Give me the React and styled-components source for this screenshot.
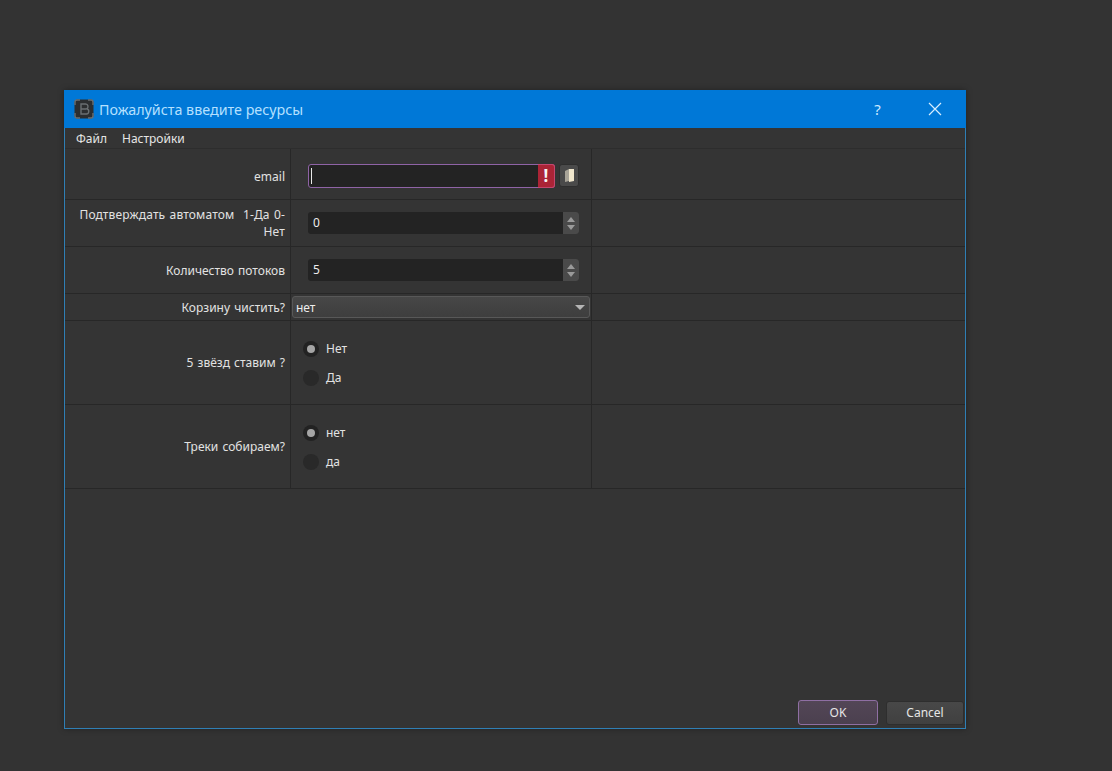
import styled, { createGlobalStyle } from 'styled-components';

const GlobalStyle = createGlobalStyle`
    html, body {
        margin: 0;
        padding: 0;
        height: 100%;
        background: #333333;
        font-family: "Noto Sans", "Open Sans", sans-serif;
        overflow: hidden;
    }
`

const Page = styled.div`
    width: 1112px;
    height: 771px;
    padding: 90px 0 0 64px;
    box-sizing: border-box;
`

const Window = styled.div`
    width: 902px;
    height: 639px;
    box-sizing: border-box;
    display: flex;
    flex-direction: column;
    background: #343434;
    border: 1px solid #2f7fb5;
    border-top: none;
    box-shadow: 0 0 6px rgba(0,0,0,.35);
`

const TitleBar = styled.div`
    height: 38px;
    margin: 0 -1px;
    flex-shrink: 0;
    display: flex;
    align-items: center;
    background: #0078d7;
    padding-left: 10px;
`

const TitleText = styled.div`
    margin-left: 5px;
    font-size: 14.3px;
    color: #b5e0ff;
    white-space: nowrap;
    flex: 1;
`

const TitleButton = styled.div`
    width: 57px;
    display: flex;
    justify-content: center;
    font-size: 15px;
    color: #cfeaff;
    margin-right: ${p => p.$right || 0}px;
`

const MenuBar = styled.div`
    height: 21px;
    box-sizing: border-box;
    flex-shrink: 0;
    display: flex;
    align-items: center;
    gap: 15px;
    padding-left: 11px;
    font-size: 12px;
    color: #e6e6e6;
    border-bottom: 1px solid #2d2d2d;
`

const Row = styled.div`
    display: grid;
    grid-template-columns: 226px 301px 1fr;
    height: ${p => p.$height}px;
    box-sizing: border-box;
    border-bottom: 1px solid #272727;
`

const LabelCell = styled.div`
    display: flex;
    align-items: center;
    justify-content: flex-end;
    text-align: right;
    padding: ${p => p.$top || 0}px 5px 0 14px;
    font-size: 12px;
    line-height: 17px;
    word-spacing: 1px;
    letter-spacing: ${p => p.$wide ? '.15px' : '0'};
    color: #e2e2e2;
    border-right: 1px solid #272727;
`

const FieldCell = styled.div`
    display: flex;
    align-items: center;
    gap: 4px;
    padding: ${p => p.$pad || '0 12px 0 17px'};
    border-right: 1px solid #272727;
`

const RadioCell = styled(FieldCell)`
    flex-direction: column;
    align-items: flex-start;
    justify-content: center;
    gap: 13px;
    padding: 1px 0 0 12px;
`

const ErrorInput = styled.div`
    flex: 1;
    height: 24px;
    box-sizing: border-box;
    display: flex;
    justify-content: space-between;
    background: #232323;
    border: 1px solid #8f63a6;
    border-radius: 3px;
`

const Caret = styled.div`
    width: 1px;
    height: 16px;
    margin: 3px 0 0 2px;
    background: #e8e8e8;
`

const ErrorBadge = styled.div`
    width: 17px;
    margin: -1px -1px -1px 0;
    box-sizing: border-box;
    border: 1px solid #c4476e;
    border-left: none;
    border-radius: 0 3px 3px 0;
    background: #ab2436;
    color: #f5f5f5;
    font-size: 17px;
    font-weight: 700;
    line-height: 22px;
    text-align: center;
`

const BookButton = styled.div`
    width: 18px;
    height: 21px;
    flex-shrink: 0;
    display: flex;
    align-items: center;
    justify-content: center;
    background: #4a4a4a;
    border: 1px solid #2e2e2e;
    border-radius: 3px;
`

const Spin = styled.div`
    flex: 1;
    height: 22px;
    display: flex;
    background: #232323;
    border-radius: 3px;
    font-size: 12px;
    color: #ededed;
`

const SpinValue = styled.div`
    flex: 1;
    padding-left: 5px;
    line-height: 22px;
`

const SpinArrows = styled.div`
    width: 16px;
    display: flex;
    flex-direction: column;
    align-items: center;
    justify-content: center;
    gap: 3px;
    background: #4a4a4a;
    border-radius: 0 3px 3px 0;
`

const Arrow = styled.div`
    width: 0;
    height: 0;
    border-left: 4px solid transparent;
    border-right: 4px solid transparent;
    ${p => p.$up ? 'border-bottom: 5px solid #9a9a9a;' : 'border-top: 5px solid #9a9a9a;'}
`

const SelectArrow = styled.div`
    width: 0;
    height: 0;
    border-left: 5px solid transparent;
    border-right: 5px solid transparent;
    border-top: 5px solid #b5b5b5;
`

const Select = styled.div`
    flex: 1;
    height: 22px;
    box-sizing: border-box;
    display: flex;
    align-items: center;
    justify-content: space-between;
    padding: 0 4px 0 3px;
    background: linear-gradient(#474747, #3e3e3e);
    border: 1px solid #585858;
    border-radius: 3px;
    font-size: 12px;
    color: #ededed;
`

const RadioRow = styled.div`
    display: flex;
    align-items: center;
    gap: 7px;
    font-size: 12px;
    line-height: 16px;
    color: #e2e2e2;
`

const RadioDot = styled.div`
    width: 16px;
    height: 16px;
    border-radius: 50%;
    background: ${p => p.$on ? '#222222' : '#292929'};
    display: flex;
    align-items: center;
    justify-content: center;
    &::after {
        content: '';
        width: 8px;
        height: 8px;
        border-radius: 50%;
        background: ${p => p.$on ? '#a5a5a5' : 'transparent'};
    }
`

const Footer = styled.div`
    margin-top: auto;
    display: flex;
    align-items: center;
    justify-content: flex-end;
    gap: 8px;
    padding: 0 1px 3px 0;
`

const Button = styled.div`
    width: ${p => p.$primary ? 80 : 78}px;
    height: ${p => p.$primary ? 25 : 24}px;
    box-sizing: border-box;
    display: flex;
    align-items: center;
    justify-content: center;
    font-size: 12px;
    color: #e6e6e6;
    border-radius: 3px;
    background: ${p => p.$primary ? 'linear-gradient(#534656, #4b404f)' : 'linear-gradient(#484848, #404040)'};
    border: 1px solid ${p => p.$primary ? '#8f6fa3' : '#2e2e2e'};
`

const AppIcon = () => (
    <svg width="20" height="20" viewBox="0 0 20 20">
        <rect x="0.5" y="0.5" width="19" height="19" rx="3" fill="#2c2e30" />
        <path d="M1 6V3a2 2 0 0 1 2-2h3M14 1h3a2 2 0 0 1 2 2v3M19 14v3a2 2 0 0 1-2 2h-3M6 19H3a2 2 0 0 1-2-2v-3" fill="none" stroke="#6a6f72" strokeWidth="1.4" />
        <path d="M7 5h4.5a2.5 2.5 0 0 1 1 4.8A2.6 2.6 0 0 1 11.8 15H7zM7 10h5" fill="none" stroke="#6a6f72" strokeWidth="1.4" />
    </svg>
);

const CloseIcon = () => (
    <svg width="14" height="14" viewBox="0 0 14 14">
        <path d="M1 1l12 12M13 1L1 13" stroke="#d6eeff" strokeWidth="1.2" fill="none" />
    </svg>
);

const BookIcon = () => (
    <svg width="11" height="15" viewBox="0 0 11 15">
        <path d="M1 3l4-2v12l-4 1z" fill="#a8a498" />
        <path d="M5 1h5v12l-5 1z" fill="#efe6cc" />
    </svg>
);

const SpinBox = ({ value }) => (
    <Spin>
        <SpinValue>{value}</SpinValue>
        <SpinArrows>
            <Arrow $up />
            <Arrow />
        </SpinArrows>
    </Spin>
);

const Radio = ({ on, children }) => (
    <RadioRow>
        <RadioDot $on={on} />
        {children}
    </RadioRow>
);

const App = () => (
    <Page>
        <GlobalStyle />
        <Window>
            <TitleBar>
                <AppIcon />
                <TitleText>Пожалуйста введите ресурсы</TitleText>
                <TitleButton>?</TitleButton>
                <TitleButton $right={3}><CloseIcon /></TitleButton>
            </TitleBar>
            <MenuBar>
                <span>Файл</span>
                <span>Настройки</span>
            </MenuBar>
            <Row $height={51}>
                <LabelCell $top={4}>email</LabelCell>
                <FieldCell $pad="3px 12px 0 17px">
                    <ErrorInput>
                        <Caret />
                        <ErrorBadge>!</ErrorBadge>
                    </ErrorInput>
                    <BookButton><BookIcon /></BookButton>
                </FieldCell>
                <div />
            </Row>
            <Row $height={47}>
                <LabelCell $wide>Подтверждать автоматом &nbsp;1-Да 0-Нет</LabelCell>
                <FieldCell><SpinBox value="0" /></FieldCell>
                <div />
            </Row>
            <Row $height={47}>
                <LabelCell>Количество потоков</LabelCell>
                <FieldCell><SpinBox value="5" /></FieldCell>
                <div />
            </Row>
            <Row $height={27}>
                <LabelCell>Корзину чистить?</LabelCell>
                <FieldCell $pad="0 1px">
                    <Select>
                        нет
                        <SelectArrow />
                    </Select>
                </FieldCell>
                <div />
            </Row>
            <Row $height={84}>
                <LabelCell>5 звёзд ставим ?</LabelCell>
                <RadioCell>
                    <Radio on>Нет</Radio>
                    <Radio>Да</Radio>
                </RadioCell>
                <div />
            </Row>
            <Row $height={84}>
                <LabelCell>Треки собираем?</LabelCell>
                <RadioCell>
                    <Radio on>нет</Radio>
                    <Radio>да</Radio>
                </RadioCell>
                <div />
            </Row>
            <Footer>
                <Button $primary>OK</Button>
                <Button>Cancel</Button>
            </Footer>
        </Window>
    </Page>
);

export default App;
